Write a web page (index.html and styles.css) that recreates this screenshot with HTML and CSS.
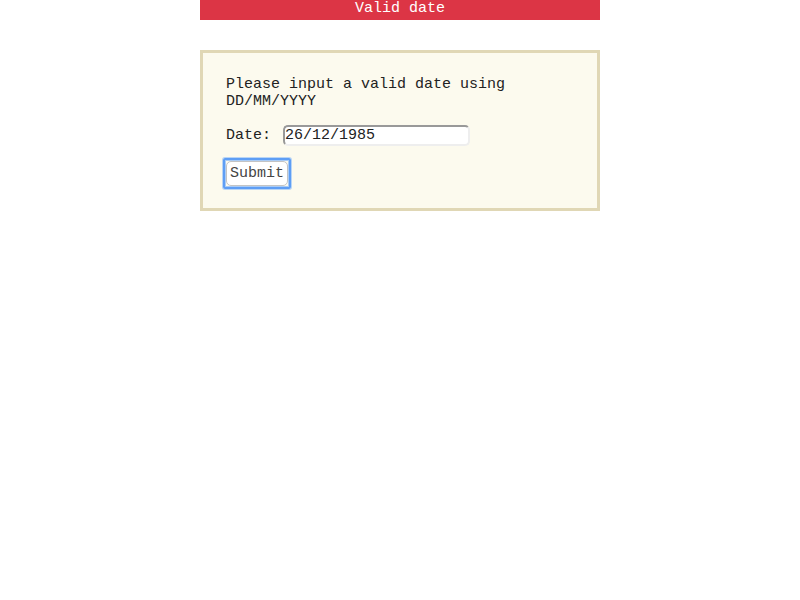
FILE: index.html
```html
<!DOCTYPE html>
<html lang="en">
<head>
<meta charset="utf-8">
<title>Date</title>
<link rel="stylesheet" href="styles.css">
</head>
<body>
<div class="message" role="status">Valid date</div>
<form class="card">
  <p class="hint">Please input a valid date using DD/MM/YYYY</p>
  <div class="field">
    <label for="date">Date:</label>
    <input class="date" id="date" type="text" value="26/12/1985">
  </div>
  <button class="submit" type="button">Submit</button>
</form>
</body>
</html>
```

FILE: styles.css
```css
* {
  box-sizing: border-box;
}

body {
  margin: 0;
  background: #fff;
  color: #222;
  font: 15px/17px "Liberation Mono", "Courier New", monospace;
}

.message,
.card {
  width: 50%;
  margin: 0 auto;
}

.message {
  padding-bottom: 3px;
  background: #dc3545;
  color: #fff;
  text-align: center;
}

.card {
  display: flex;
  flex-direction: column;
  align-items: flex-start;
  gap: 15px;
  margin-top: 30px;
  padding: 23px 23px 22px;
  border: 3px solid #e0d7b5;
  background: #fcfaee;
}

.hint {
  margin: 0;
}

.field {
  display: flex;
  align-items: center;
  gap: 12px;
}

.date {
  width: 187px;
  padding: 0;
  border: 2px solid;
  border-color: #999 #eee #eee #999;
  border-radius: 5px;
  background: #fff;
  color: #222;
  font: inherit;
}

.submit {
  position: relative;
  padding: 3px;
  border: 1px solid #c4c4c4;
  border-radius: 5px;
  background: #fff;
  color: #444;
  font: inherit;
  outline: none;
}

/* Square focus ring around the rounded button */
.submit::before {
  content: "";
  position: absolute;
  inset: -4px;
  border: 2px solid #5e9ef5;
  border-radius: 2px;
  box-shadow: 0 0 0 1px #b9d5f5, inset 0 0 0 1px #a9cbf5;
}
```
